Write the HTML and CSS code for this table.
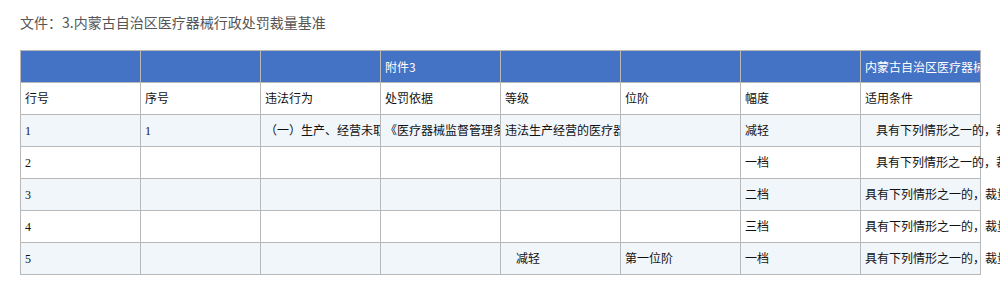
FILE: index.html
```html
<!DOCTYPE html>
<html lang="zh-CN">
<head>
<meta charset="utf-8">
<title>内蒙古自治区医疗器械行政处罚裁量基准</title>
<link rel="stylesheet" href="styles.css">
</head>
<body>
<div class="page">
  <div class="file-title">文件：3.内蒙古自治区医疗器械行政处罚裁量基准</div>
  <table class="sheet">
    <colgroup>
      <col><col><col><col><col><col><col><col>
    </colgroup>
    <tr class="band">
      <td></td><td></td><td></td><td><div class="cell">附件3</div></td><td></td><td></td><td></td><td><div class="cell">内蒙古自治区医疗器械</div></td>
    </tr>
    <tr class="head">
      <td><div class="cell">行号</div></td><td><div class="cell">序号</div></td><td><div class="cell">违法行为</div></td><td><div class="cell">处罚依据</div></td><td><div class="cell">等级</div></td><td><div class="cell">位阶</div></td><td><div class="cell">幅度</div></td><td><div class="cell">适用条件</div></td>
    </tr>
    <tr class="alt">
      <td><div class="cell">1</div></td><td><div class="cell">1</div></td><td><div class="cell">（一）生产、经营未取</div></td><td><div class="cell">《医疗器械监督管理条</div></td><td><div class="cell">违法生产经营的医疗器</div></td><td></td><td><div class="cell">减轻</div></td><td><div class="cell open indent">具有下列情形之一的，裁</div></td>
    </tr>
    <tr>
      <td><div class="cell">2</div></td><td></td><td></td><td></td><td></td><td></td><td><div class="cell">一档</div></td><td><div class="cell open indent">具有下列情形之一的，裁</div></td>
    </tr>
    <tr class="alt">
      <td><div class="cell">3</div></td><td></td><td></td><td></td><td></td><td></td><td><div class="cell">二档</div></td><td><div class="cell open">具有下列情形之一的，裁量</div></td>
    </tr>
    <tr>
      <td><div class="cell">4</div></td><td></td><td></td><td></td><td></td><td></td><td><div class="cell">三档</div></td><td><div class="cell open">具有下列情形之一的，裁量</div></td>
    </tr>
    <tr class="alt">
      <td><div class="cell">5</div></td><td></td><td></td><td></td><td><div class="cell indent">减轻</div></td><td><div class="cell">第一位阶</div></td><td><div class="cell">一档</div></td><td><div class="cell open">具有下列情形之一的，裁量</div></td>
    </tr>
  </table>
</div>
</body>
</html>
```

FILE: styles.css
```css
html, body {
  margin: 0;
  padding: 0;
  background: #ffffff;
  overflow: hidden;
}

.page {
  padding: 12px 20px 0 20px;
  width: 1000px;
  box-sizing: border-box;
  overflow: hidden;
}

.file-title {
  font-family: "Noto Sans CJK SC", "Liberation Sans", sans-serif;
  font-size: 14px;
  line-height: 20px;
  color: #555555;
  margin-bottom: 18px;
  white-space: nowrap;
}

.sheet {
  border-collapse: collapse;
  table-layout: fixed;
  width: 961px;
  font-family: "Liberation Serif", "Noto Sans CJK SC", serif;
  font-size: 12px;
  color: #111111;
}

.sheet col {
  width: 120px;
}

.sheet td {
  border: 1px solid #b8b8b8;
  height: 31px;
  padding: 0;
  vertical-align: middle;
  background: #ffffff;
}

.sheet tr.alt td {
  background: #f1f6fb;
}

.sheet tr.band td {
  background: #4472c4;
  color: #ffffff;
  font-family: "Noto Sans CJK SC", "Liberation Sans", sans-serif;
}

.cell {
  padding: 0 0 0 4px;
  line-height: 16px;
  white-space: nowrap;
  overflow: hidden;
}

.cell.open {
  overflow: visible;
}

.cell.indent {
  padding-left: 15px;
}
```
